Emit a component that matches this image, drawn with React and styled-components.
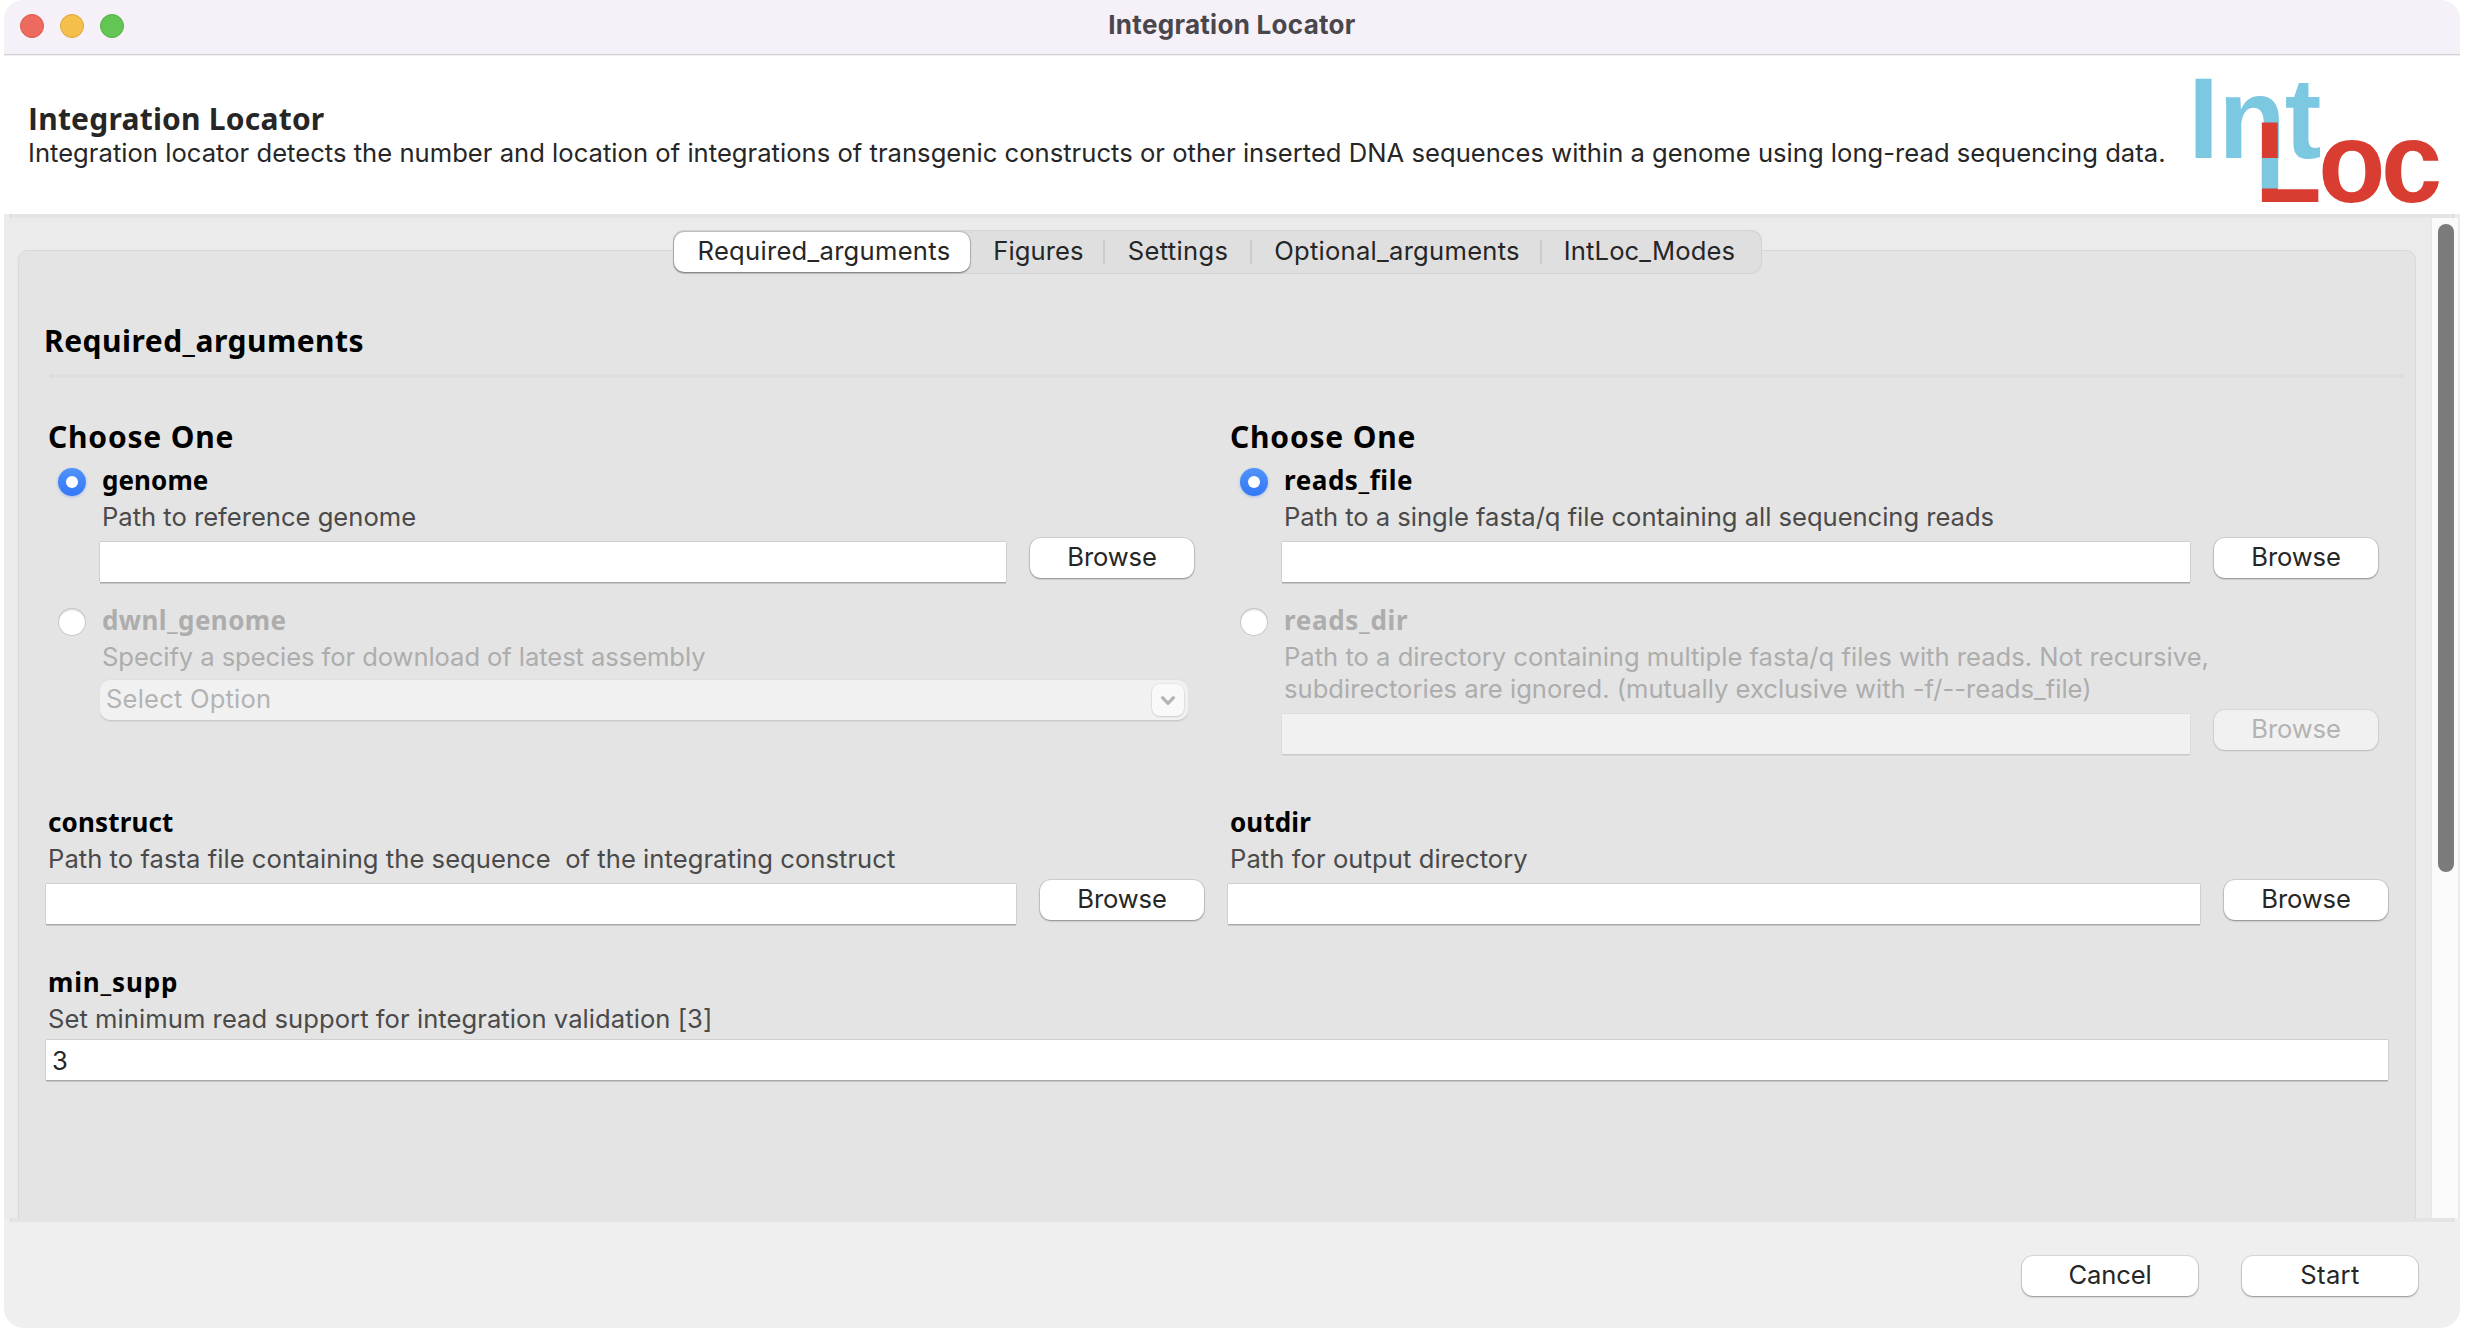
import React, { useState } from "react";
import styled, { createGlobalStyle, css } from "styled-components";

const UI = 'Inter, "Liberation Sans", sans-serif';
const HUMANIST = '"Noto Sans", "Open Sans", sans-serif';

const Global = createGlobalStyle`
  * { box-sizing: border-box; }
  body { margin: 0; background: #fff; font-family: ${UI}; }
`;

const Window = styled.div`
  width: 2456px;
  height: 1328px;
  margin-left: 4px;
  border-radius: 20px;
  overflow: hidden;
  background: #efefef;
  display: flex;
  flex-direction: column;
`;

const TitleBar = styled.header`
  height: 56px;
  flex: none;
  display: grid;
  grid-template-columns: 1fr auto 1fr;
  padding-left: 16px;
  background: #f6f1f8;
  border-bottom: 1px solid #f0f0f0;
  box-shadow: inset 0 -1px 0 #d3d1d4;
`;

const Lights = styled.div`
  display: flex;
  gap: 16px;
  padding-top: 14px;
`;

const Light = styled.span`
  width: 24px;
  height: 24px;
  border-radius: 50%;
  background: ${(p) => p.$fill};
  border: 1px solid ${(p) => p.$rim};
`;

const WindowTitle = styled.div`
  margin-left: -16px;
  font: 700 26px/32px ${UI};
  letter-spacing: 0.29px;
  padding-top: 9px;
  color: #4a474c;
`;

const Header = styled.section`
  height: 158px;
  flex: none;
  display: flex;
  justify-content: space-between;
  background: #fff;
  color: #262626;
`;

const HeaderText = styled.div`
  padding: 43px 0 0 24px;
`;

const AppName = styled.h1`
  margin: 0;
  font: 700 30px/40px ${HUMANIST};
  height: 38px;
  letter-spacing: 0.22px;
`;

const Initial = styled.span`
  font-family: "Open Sans", sans-serif;
`;

const Tagline = styled.p`
  margin: 0;
  font: 400 25.6px/32px ${UI};
  letter-spacing: 0.02px;
  white-space: nowrap;
`;

const LogoSvg = styled.svg`
  width: 272px;
  height: 158px;
  overflow: visible;
  font: 700 110px "Liberation Sans", Arial, sans-serif;
`;

const Rule = styled.div`
  height: 4px;
  flex: none;
  margin: 0 6px;
  background: #e4e4e4;
  border: solid #d8d8d8;
  border-width: 0 1px;
`;

const Body = styled.main`
  flex: none;
  height: 1008px;
  display: flex;
  flex-direction: column;
  background: linear-gradient(#ebebeb 1004px, #efefef 1004px);
`;

const Viewport = styled.div`
  height: 1000px;
  display: flex;
  overflow: hidden;
`;

const Content = styled.div`
  width: 2427px;
  padding: 12px 15px 0 14px;
  display: flex;
  flex-direction: column;
  align-items: center;
`;

const TabBar = styled.nav`
  height: 44px;
  flex: none;
  display: flex;
  align-items: center;
  z-index: 1;
  margin-bottom: -24px;
  border-radius: 11px;
  background: #dfdfdf;
  box-shadow: inset 0 0 0 1px #d5d5d5, inset 0 0 4px rgba(0, 0, 0, 0.04);
`;

const Tab = styled.button`
  width: ${(p) => p.$width}px;
  height: 40px;
  padding: 0 ${(p) => p.$trail || 0}px 2px ${(p) => p.$lead || 0}px;
  border: 0;
  background: none;
  font: 400 25.6px/32px ${UI};
  letter-spacing: ${(p) => p.$track}px;
  color: #262626;
  ${(p) =>
    p.$active &&
    css`
      margin-left: 1px;
      background: #fff;
      border-radius: 10px;
      box-shadow: 0 0 0 1px rgba(0, 0, 0, 0.13), 0 1px 2px rgba(0, 0, 0, 0.4);
    `}
`;

const Separator = styled.span`
  width: 2px;
  height: 24px;
  margin: 0 -1px;
  background: #cbcbcb;
`;

const Panel = styled.section`
  width: 2398px;
  height: 1000px;
  flex: none;
  padding: 70px 27px 0;
  border: 1px solid #d8d8d8;
  border-radius: 10px;
  background: #e4e4e4;
`;

const PanelTitle = styled.h2`
  margin: 0 0 0 -2px;
  font: 700 30px/40px ${HUMANIST};
  letter-spacing: 0.49px;
  color: #000;
  height: 53px;
`;

const Divider = styled.div`
  height: 4px;
  margin: 0 -17px 0 4px;
  background: #dedede;
  border-left: 1px solid #d6d6d6;
`;

const Form = styled.div`
  display: grid;
  grid-template-columns: 1158px 1160px;
  grid-template-rows: 387px 160px auto;
  column-gap: 24px;
  padding-top: 39px;
`;

const Field = styled.div`
  grid-column: ${(p) => (p.$wide ? "1 / -1" : "auto")};
  display: flex;
  flex-direction: column;
`;

const GroupTitle = styled.h3`
  margin: 0;
  height: 45px;
  padding-left: 2px;
  font: 700 30px/40px ${HUMANIST};
  letter-spacing: 0.8px;
  color: #000;
`;

const Option = styled.div`
  display: grid;
  grid-template-columns: 42px 1fr;
  padding: 0 10px 0 12px;
  margin-bottom: 20px;
`;

const Radio = styled.button`
  width: 28px;
  height: 28px;
  margin-top: 6px;
  padding: 0;
  border: 0;
  border-radius: 50%;
  display: flex;
  align-items: center;
  justify-content: center;
  background: #fff;
  box-shadow: inset 0 0 0 1px #c6c6c6, inset 0 2px 2px rgba(0, 0, 0, 0.14);
  ${(p) =>
    p.$on &&
    css`
      background: linear-gradient(#5093fa, #3377f7);
      box-shadow: 0 1px 3px rgba(50, 110, 240, 0.35);
      &::after {
        content: "";
        width: 12px;
        height: 12px;
        border-radius: 50%;
        background: #fff;
      }
    `}
`;

const Label = styled.div`
  height: 39px;
  padding-left: 2px;
  font: 700 26px/36px ${HUMANIST};
  letter-spacing: ${(p) => p.$track}px;
  color: ${(p) => (p.$disabled ? "#adadad" : "#000")};
`;

const Help = styled.div`
  padding-left: 2px;
  margin-bottom: ${(p) => p.$after || 5}px;
  font: 400 25.6px/32px ${UI};
  letter-spacing: ${(p) => p.$track}px;
  white-space: pre;
  color: ${(p) => (p.$disabled ? "#adadad" : "#4a4a4a")};
`;

const HelpLine = styled.span`
  display: block;
`;

const Controls = styled.div`
  display: flex;
  gap: 24px;
  align-items: flex-start;
`;

const Input = styled.input`
  flex: 1;
  min-width: 0;
  height: 40px;
  margin: 4px 0 0;
  padding: 0 0 0 6px;
  border: 0;
  border-radius: 0;
  outline: 0;
  font: 400 25.6px/32px ${UI};
  color: #262626;
  background: #fff;
  box-shadow: -1px 0 #cfcfcf, 1px 0 #cfcfcf, 0 -1px #cfcfcf, 0 1px #a9a9a9, 0 2px #c6c6c6;
  &:disabled {
    background: #f1f1f1;
    box-shadow: -1px 0 #dcdcdc, 1px 0 #dcdcdc, 0 -1px #dcdcdc, 0 1px #c8c8c8, 0 2px #d7d7d7;
  }
`;

const NumberRow = styled.div`
  display: flex;
  margin-top: -4px;
`;

const Button = styled.button`
  width: ${(p) => p.$width || 164}px;
  height: 40px;
  padding: 0 0 2px;
  border: 0;
  border-radius: 11px;
  background: #fff;
  font: 400 25.6px/32px ${UI};
  letter-spacing: ${(p) => p.$track ?? -0.12}px;
  color: #262626;
  box-shadow: 0 0 0 1px rgba(0, 0, 0, 0.09), 0 1px 2px rgba(0, 0, 0, 0.33);
  &:disabled {
    background: #f1f1f1;
    color: #b3b3b3;
    box-shadow: 0 0 0 1px rgba(0, 0, 0, 0.05), 0 1px 2px rgba(0, 0, 0, 0.14);
  }
`;

const Select = styled.div`
  height: 40px;
  width: 1088px;
  display: flex;
  align-items: center;
  justify-content: space-between;
  padding: 0 4px 0 6px;
  border-radius: 10px;
  background: #f1f1f1;
  color: #b3b3b3;
  font: 400 25.6px/32px ${UI};
  letter-spacing: 0.18px;
  box-shadow: 0 -1px #dfdfdf, 0 1px #c9c9c9, 0 2px 1px #d7d7d7;
`;

const SelectText = styled.span`
  padding-bottom: 2px;
`;

const SelectArrow = styled.span`
  width: 32px;
  height: 32px;
  display: flex;
  align-items: center;
  justify-content: center;
  border-radius: 8px;
  background: #f9f9f9;
  box-shadow: 0 0 0 1px rgba(0, 0, 0, 0.04), 0 1px 2px rgba(0, 0, 0, 0.12);
`;

const Scrollbar = styled.div`
  width: 27px;
  padding: 6px 0 0 6px;
  border-left: 1px solid #e6e6e6;
  background: #fafafa;
`;

const Thumb = styled.div`
  width: 16px;
  height: 648px;
  border-radius: 8px;
  background: #7b7b7b;
`;

const Footer = styled.footer`
  flex: 1;
  display: flex;
  justify-content: flex-end;
  gap: 44px;
  padding: 34px 42px 0 0;
`;

function Logo() {
  return (
    <LogoSvg viewBox="2188 56 272 158">
      <g transform="scale(1 1.04)">
        <text x="2188.3 2218.5 2284.7" y="151.92" fill="#7cc8e1">Int</text>
        <text x="2254.6 2318.3 2381" y="194.23" fill="#d93c30">Loc</text>
      </g>
      <rect x="2262" y="158" width="16.2" height="30.5" fill="#7cc8e1" />
    </LogoSvg>
  );
}

const TABS = [
  { name: "Required_arguments", width: 296, track: 0.27, lead: 5 },
  { name: "Figures", width: 134, track: 0.08, lead: 4 },
  { name: "Settings", width: 147, track: 0.3, lead: 2 },
  { name: "Optional_arguments", width: 290, track: 0.26, lead: 3 },
  { name: "IntLoc_Modes", width: 221, track: 0.12, trail: 3 },
];

function FilePicker({ disabled }) {
  return (
    <Controls>
      <Input disabled={disabled} />
      <Button disabled={disabled}>Browse</Button>
    </Controls>
  );
}

function Choice({ name, track, help, helpTrack, on, onSelect, after, children }) {
  return (
    <Option>
      <Radio $on={on} onClick={onSelect} />
      <div>
        <Label $disabled={!on} $track={track}>{name}</Label>
        <Help $disabled={!on} $track={helpTrack} $after={after}>
          {help.map((line) => (
            <HelpLine key={line}>{line}</HelpLine>
          ))}
        </Help>
        {children}
      </div>
    </Option>
  );
}

export default function App() {
  const [tab, setTab] = useState(0);
  const [genome, setGenome] = useState(0);
  const [reads, setReads] = useState(0);

  return (
    <>
      <Global />
      <Window>
        <TitleBar>
          <Lights>
            <Light $fill="#ec6b5e" $rim="#d8574a" />
            <Light $fill="#f4bf4b" $rim="#dba63a" />
            <Light $fill="#63c654" $rim="#50ae42" />
          </Lights>
          <WindowTitle>Integration Locator</WindowTitle>
        </TitleBar>
        <Header>
          <HeaderText>
            <AppName><Initial>I</Initial>ntegration Locator</AppName>
            <Tagline>
              Integration locator detects the number and location of integrations of transgenic constructs or
              other inserted DNA sequences within a genome using long-read sequencing data.
            </Tagline>
          </HeaderText>
          <Logo />
        </Header>
        <Body>
          <Rule />
          <Viewport>
            <Content>
              <TabBar>
                {TABS.map(({ name, width, track, lead, trail }, i) => (
                  <React.Fragment key={name}>
                    {i > 1 && <Separator />}
                    <Tab $width={width} $track={track} $lead={lead} $trail={trail} $active={tab === i} onClick={() => setTab(i)}>
                      {name}
                    </Tab>
                  </React.Fragment>
                ))}
              </TabBar>
              <Panel>
                <PanelTitle>Required_arguments</PanelTitle>
                <Divider />
                <Form>
                  <Field>
                    <GroupTitle>Choose One</GroupTitle>
                    <Choice name="genome" track={0.07} help={["Path to reference genome"]} helpTrack={-0.01} on={genome === 0} onSelect={() => setGenome(0)}>
                      <FilePicker disabled={genome !== 0} />
                    </Choice>
                    <Choice name="dwnl_genome" track={0.41} help={["Specify a species for download of latest assembly"]} helpTrack={-0.08} after={7} on={genome === 1} onSelect={() => setGenome(1)}>
                      <Select>
                        <SelectText>Select Option</SelectText>
                        <SelectArrow>
                          <svg width="18" height="14" viewBox="0 0 18 14" fill="none" stroke="#b5b5b5" strokeWidth="3.2" strokeLinecap="round" strokeLinejoin="round">
                            <path d="M3.5 4.6 L9 10.4 L14.5 4.6" />
                          </svg>
                        </SelectArrow>
                      </Select>
                    </Choice>
                  </Field>
                  <Field>
                    <GroupTitle>Choose One</GroupTitle>
                    <Choice name="reads_file" track={0.56} help={["Path to a single fasta/q file containing all sequencing reads"]} helpTrack={-0.03} on={reads === 0} onSelect={() => setReads(0)}>
                      <FilePicker disabled={reads !== 0} />
                    </Choice>
                    <Choice
                      name="reads_dir"
                      track={0.68}
                      help={[
                        "Path to a directory containing multiple fasta/q files with reads. Not recursive,",
                        "subdirectories are ignored. (mutually exclusive with -f/--reads_file)",
                      ]}
                      helpTrack={0}
                      on={reads === 1}
                      onSelect={() => setReads(1)}
                    >
                      <FilePicker disabled={reads !== 1} />
                    </Choice>
                  </Field>
                  <Field>
                    <Label $track={0.15}>construct</Label>
                    <Help $track={0.04}>{"Path to fasta file containing the sequence  of the integrating construct"}</Help>
                    <FilePicker />
                  </Field>
                  <Field>
                    <Label $track={0.12}>outdir</Label>
                    <Help $track={0.07}>Path for output directory</Help>
                    <FilePicker />
                  </Field>
                  <Field $wide>
                    <Label $track={0.85}>min_supp</Label>
                    <Help $track={0.05}>Set minimum read support for integration validation [3]</Help>
                    <NumberRow>
                      <Input defaultValue="3" />
                    </NumberRow>
                  </Field>
                </Form>
              </Panel>
            </Content>
            <Scrollbar>
              <Thumb />
            </Scrollbar>
          </Viewport>
          <Rule />
        </Body>
        <Footer>
          <Button $width={176} $track={-0.13}>Cancel</Button>
          <Button $width={176} $track={0.37}>Start</Button>
        </Footer>
      </Window>
    </>
  );
}
